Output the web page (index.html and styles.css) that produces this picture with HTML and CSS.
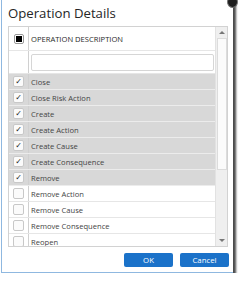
FILE: index.html
```html
<!DOCTYPE html>
<html>
<head>
<meta charset="utf-8">
<link rel="stylesheet" href="styles.css">
</head>
<body>
<div class="dialog">
  <span class="close-knob"></span>
  <h1 class="title">Operation Details</h1>
  <div class="grid">
    <div class="grid-main">
      <div class="row head">
        <div class="cb-cell"><span class="cb ind"></span></div>
        <div class="txt">OPERATION DESCRIPTION</div>
      </div>
      <div class="row filter">
        <div class="cb-cell"></div>
        <div class="txt"><input class="filter-input" type="text"></div>
      </div>
      <div class="body">
        <div class="row on"><div class="cb-cell"><span class="cb">✓</span></div><div class="txt">Close</div></div>
        <div class="row on"><div class="cb-cell"><span class="cb">✓</span></div><div class="txt">Close Risk Action</div></div>
        <div class="row on"><div class="cb-cell"><span class="cb">✓</span></div><div class="txt">Create</div></div>
        <div class="row on"><div class="cb-cell"><span class="cb">✓</span></div><div class="txt">Create Action</div></div>
        <div class="row on"><div class="cb-cell"><span class="cb">✓</span></div><div class="txt">Create Cause</div></div>
        <div class="row on"><div class="cb-cell"><span class="cb">✓</span></div><div class="txt">Create Consequence</div></div>
        <div class="row on"><div class="cb-cell"><span class="cb">✓</span></div><div class="txt">Remove</div></div>
        <div class="row"><div class="cb-cell"><span class="cb"></span></div><div class="txt">Remove Action</div></div>
        <div class="row"><div class="cb-cell"><span class="cb"></span></div><div class="txt">Remove Cause</div></div>
        <div class="row"><div class="cb-cell"><span class="cb"></span></div><div class="txt">Remove Consequence</div></div>
        <div class="row"><div class="cb-cell"><span class="cb"></span></div><div class="txt">Reopen</div></div>
      </div>
    </div>
    <div class="scrollbar">
      <span class="arrow up"></span>
      <span class="thumb"></span>
      <span class="track"></span>
      <span class="arrow down"></span>
    </div>
  </div>
  <div class="actions">
    <button class="btn">OK</button>
    <button class="btn">Cancel</button>
  </div>
</div>
</body>
</html>
```
FILE: styles.css
```css
html, body {
  margin: 0;
  padding: 0;
  background: #ffffff;
  font-family: "Open Sans", "Noto Sans", sans-serif;
}
.dialog {
  position: relative;
  margin-left: 1px;
  width: 232px;
  height: 273px;
  background: #fff;
  border-left: 1px solid #8fb8e0;
  border-bottom: 1px solid #8fb8e0;
  box-shadow: 3px 3px 2px rgba(30, 30, 30, 0.8);
  box-sizing: border-box;
  padding: 5px 4px 0 6px;
  display: flex;
  flex-direction: column;
}
.close-knob {
  position: absolute;
  right: -5px;
  top: -4px;
  width: 9px;
  height: 10px;
  border-radius: 50%;
  background: #1e1e1e;
  border: 1px solid #777;
}
.title {
  margin: 0;
  font-size: 13.2px;
  font-weight: normal;
  color: #262626;
  line-height: 16px;
  height: 21px;
}
.grid {
  display: flex;
  width: 220px;
  height: 221px;
  border: 1px solid #d2d2d2;
  box-sizing: border-box;
  overflow: hidden;
}
.grid-main {
  flex: 1;
  display: flex;
  flex-direction: column;
  overflow: hidden;
}
.row {
  display: flex;
  height: 16px;
  border-bottom: 1px solid #e6e6e6;
  box-sizing: border-box;
  font-size: 7.6px;
  color: #444;
}
.row.on {
  background: #d8d8d8;
  border-bottom-color: #ececec;
}
.row.head {
  height: 24px;
  font-size: 7.6px;
  color: #2a2a2a;
}
.row.filter {
  height: 23px;
}
.cb-cell {
  width: 19px;
  flex: none;
  border-right: 1px solid #d0d0d0;
  display: flex;
  align-items: center;
  justify-content: center;
}
.txt {
  flex: 1;
  display: flex;
  align-items: center;
  padding-left: 2px;
  white-space: nowrap;
}
.cb {
  width: 11px;
  height: 11px;
  box-sizing: border-box;
  border: 1px solid #c8c8c8;
  border-radius: 2px;
  background: #fbfbfb;
  font-size: 8px;
  line-height: 9px;
  text-align: center;
  color: #222;
  font-family: "DejaVu Sans", sans-serif;
}
.cb.ind {
  width: 10px;
  height: 10px;
  border: 1px solid #999;
  background: #fff;
  display: flex;
  align-items: center;
  justify-content: center;
}
.cb.ind::after {
  content: "";
  width: 6px;
  height: 6px;
  background: #000;
}
.filter-input {
  width: 183px;
  height: 17px;
  box-sizing: border-box;
  border: 1px solid #d6d6d6;
  border-radius: 2px;
  margin: 0;
  padding: 0;
}
.body {
  flex: 1;
  overflow: hidden;
}
.scrollbar {
  width: 11px;
  flex: none;
  display: flex;
  flex-direction: column;
  background: #efefef;
  border-left: 1px solid #e2e2e2;
}
.arrow {
  height: 11px;
  display: flex;
  align-items: center;
  justify-content: center;
}
.arrow.up::after {
  content: "";
  border-left: 3px solid transparent;
  border-right: 3px solid transparent;
  border-bottom: 3px solid #777;
}
.arrow.down::after {
  content: "";
  border-left: 3px solid transparent;
  border-right: 3px solid transparent;
  border-top: 3px solid #777;
}
.thumb {
  height: 130px;
  margin: 0 0 0 1px;
  background: #fbfbfb;
  border: 1px solid #dcdcdc;
}
.track {
  flex: 1;
}
.actions {
  display: flex;
  justify-content: flex-end;
  gap: 7px;
  margin-top: 6px;
}
.btn {
  width: 49px;
  height: 14px;
  border: none;
  border-radius: 2px;
  background: #1b72c9;
  color: #fff;
  font-family: "Open Sans", sans-serif;
  font-size: 7.8px;
  padding: 0;
}
```
